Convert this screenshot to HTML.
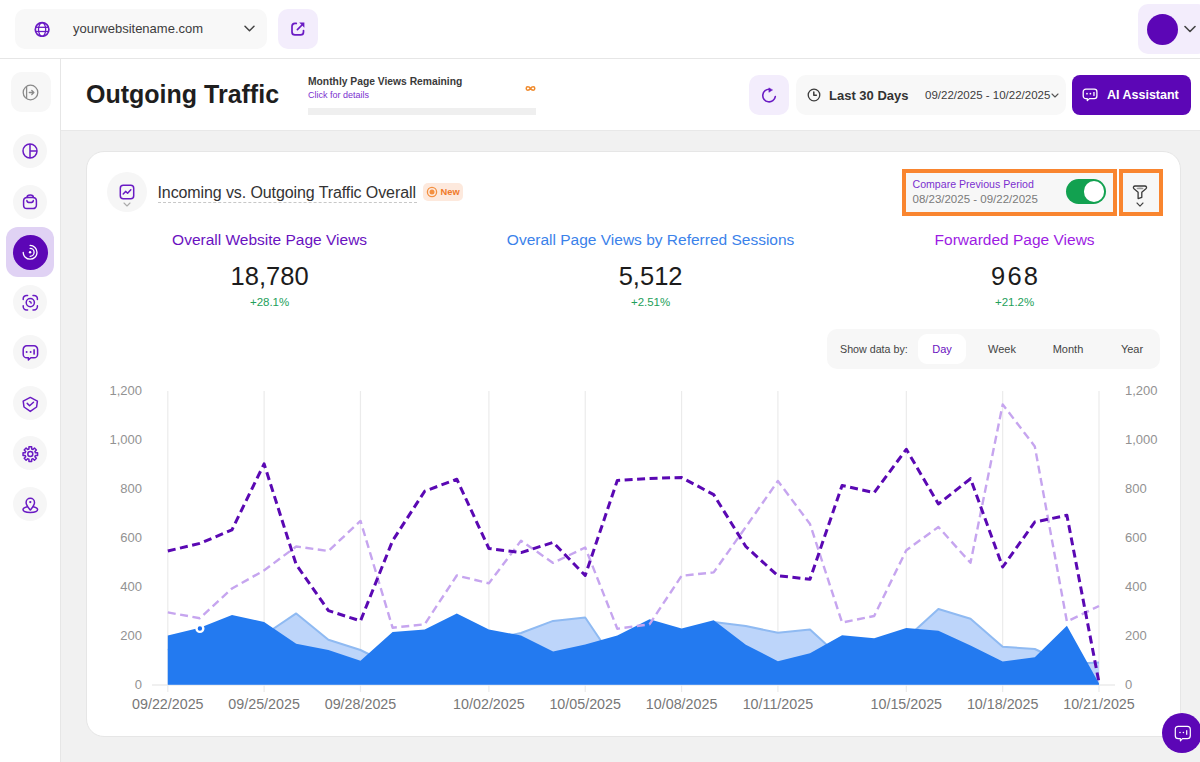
<!DOCTYPE html>
<html><head><meta charset="utf-8">
<style>
*{box-sizing:border-box;margin:0;padding:0}
html,body{width:1200px;height:762px;overflow:hidden;background:#f1f1f1;font-family:"Liberation Sans",sans-serif;color:#333}
.abs{position:absolute}
.t{position:absolute;white-space:nowrap;line-height:1}
#header{left:0;top:0;width:1200px;height:59px;background:#fff;border-bottom:1px solid #e6e6e6}
#sidebar{left:0;top:59px;width:61px;height:703px;background:#fff;border-right:1px solid #e6e6e6}
#titlebar{left:61px;top:59px;width:1139px;height:72px;background:#fff;border-bottom:1px solid #e8e8e8}
.sel{left:15px;top:9px;width:252px;height:40px;background:#f8f8f8;border-radius:10px}
.lbtn{background:#f3edfc;border-radius:10px}
.card{left:86px;top:151px;width:1095px;height:586px;background:#fff;border:1px solid #e6e6e6;border-radius:18px}
.sbi{position:absolute;left:13px;width:34px;height:34px;border-radius:50%;background:#f6f6f6}
.sbi svg{position:absolute;left:9px;top:9px}
.yl{font-size:13px;color:#929292;z-index:3}
.xl{font-size:14.3px;color:#777;width:100px;text-align:center;z-index:3}
</style></head>
<body>
<div id="header" class="abs"></div>
<div class="abs sel"></div>
<div class="abs lbtn" style="left:278px;top:9px;width:40px;height:40px"></div>
<div class="abs lbtn" style="left:1138px;top:4px;width:70px;height:50px"></div>
<div class="abs" style="left:1147px;top:14px;width:31px;height:31px;border-radius:50%;background:#5c06b6"></div>


<!-- header content -->
<svg class="abs" style="left:34px;top:21px" width="16" height="16" viewBox="0 0 16 16"><circle cx="8.1" cy="8.5" r="6.8" fill="#fff" stroke="#6a1bc4" stroke-width="1.7"/><g stroke="#6a1bc4" stroke-width="1.3" fill="none"><line x1="1.5" y1="6.3" x2="14.7" y2="6.3"/><line x1="1.5" y1="10.5" x2="14.7" y2="10.5"/><ellipse cx="8.1" cy="8.5" rx="3.6" ry="6.8"/></g></svg>
<div class="t" style="left:73px;top:22px;font-size:13px;color:#3c3c3c">yourwebsitename.com</div>
<svg class="abs" style="left:243.5px;top:25px" width="12" height="8" viewBox="0 0 12 8"><path d="M1 1.3 L5.5 5.8 L10 1.3" stroke="#444" stroke-width="1.5" fill="none" stroke-linecap="round" stroke-linejoin="round"/></svg>
<svg class="abs" style="left:290px;top:21px" width="16" height="16" viewBox="0 0 16 16"><g stroke="#6a1bc4" stroke-width="1.7" fill="none" stroke-linecap="round" stroke-linejoin="round"><path d="M6.3 2.4 H5 A3 3 0 0 0 2 5.4 V10.9 A3 3 0 0 0 5 13.9 H10.5 A3 3 0 0 0 13.5 10.9 V9.6"/><path d="M7.4 8.6 L12 4"/></g><path d="M9.2 1.6 L14.4 1.6 L14.4 6.8 Z" fill="#6a1bc4"/></svg>
<svg class="abs" style="left:1184px;top:25px" width="12" height="8" viewBox="0 0 12 8"><path d="M1 1.5 L6 6.5 L11 1.5" stroke="#444" stroke-width="1.6" fill="none" stroke-linecap="round" stroke-linejoin="round"/></svg>

<div id="sidebar" class="abs"></div>
<div id="titlebar" class="abs"></div>

<!-- sidebar content -->
<div class="abs" style="left:10.5px;top:72px;width:40px;height:40px;background:#f7f7f7;border-radius:11px"></div>
<svg class="abs" style="left:22px;top:84px" width="17" height="17" viewBox="0 0 17 17"><circle cx="8.5" cy="8.5" r="7.3" stroke="#8a8a8a" stroke-width="1.3" fill="none"/><path d="M4.6 2.6 V14.4" stroke="#8a8a8a" stroke-width="1.3"/><path d="M7.3 8.5 H11.8 M9.8 6.5 L11.9 8.5 L9.8 10.5" stroke="#8a8a8a" stroke-width="1.3" fill="none" stroke-linecap="round" stroke-linejoin="round"/></svg>

<div class="sbi" style="top:134px"><svg width="16" height="16" viewBox="0 0 16 16"><g stroke="#6a1bc4" stroke-width="1.5" fill="none"><circle cx="8" cy="8" r="7"/><path d="M8 1 V15 M8 8 H15"/></g></svg></div>
<div class="sbi" style="top:185px"><svg width="16" height="16" viewBox="0 0 16 16" style="overflow:visible"><g stroke="#6a1bc4" stroke-width="1.5" fill="none" stroke-linecap="round" stroke-linejoin="round"><path d="M4.9 3.4 H11.1 A3.3 3.3 0 0 1 14.4 6.7 V11.3 A3.3 3.3 0 0 1 11.1 14.6 H4.9 A3.3 3.3 0 0 1 1.6 11.3 V6.7 A3.3 3.3 0 0 1 4.9 3.4 Z"/><path d="M5 3.4 C5 1.5 6.3 1 8.2 1 C10.1 1 11.4 1.5 11.4 3.4"/><path d="M4.9 6.4 V6.8 C4.9 8.2 6 8.6 8.1 8.6 C10.2 8.6 11.3 8.2 11.3 6.8 V6.4"/></g></svg></div>

<div class="abs" style="left:6px;top:227px;width:48px;height:50px;background:#e0d2f4;border-radius:12px"></div>
<div class="abs" style="left:12.8px;top:234.8px;width:35px;height:35px;border-radius:50%;background:#5c06b6"></div>
<svg class="abs" style="left:21px;top:243px" width="18" height="18" viewBox="0 0 18 18"><g stroke="#fff" stroke-width="1.3" fill="none" stroke-linecap="round"><path d="M9.1 2.4 A6.9 6.9 0 1 1 2.2 9.3"/><path d="M9.1 5.3 A4 4 0 0 1 9.1 13.3"/></g><circle cx="9.1" cy="9.3" r="1.2" fill="#fff"/></svg>

<div class="sbi" style="top:285px"><svg width="16" height="16" viewBox="0 0 16 16" style="overflow:visible"><g stroke="#6a1bc4" stroke-width="1.5" fill="none" stroke-linecap="round"><path d="M1.2 5.6 V4.8 A3.4 3.4 0 0 1 4.6 1.4 H5.6"/><path d="M11 1.4 H12 A3.4 3.4 0 0 1 15.4 4.8 V5.6"/><path d="M15.4 11.8 V12.6 A3.4 3.4 0 0 1 12 16 H11"/><path d="M5.6 16 H4.6 A3.4 3.4 0 0 1 1.2 12.6 V11.8"/><circle cx="8.3" cy="8.6" r="4.1"/><path d="M7.5 7.4 A1.9 1.9 0 0 1 9.2 9.1"/></g></svg></div>
<div class="sbi" style="top:335px"><svg width="16" height="16" viewBox="0 0 16 16" style="overflow:visible"><path d="M4.8 1.8 H12 A3.6 3.6 0 0 1 15.6 5.4 V10.2 A3.6 3.6 0 0 1 12 13.8 H8.8 L6.4 15.9 V13.8 H4.8 A3.6 3.6 0 0 1 1.2 10.2 V5.4 A3.6 3.6 0 0 1 4.8 1.8 Z" stroke="#6a1bc4" stroke-width="1.5" fill="none" stroke-linejoin="round"/><circle cx="4.6" cy="8.1" r="1" fill="#6a1bc4"/><circle cx="8.6" cy="8.1" r="1" fill="#6a1bc4"/><rect x="11.3" y="5.3" width="1.6" height="5.3" fill="#6a1bc4"/></svg></div>
<div class="sbi" style="top:386px"><svg width="16" height="16" viewBox="0 0 16 16" style="overflow:visible"><g stroke="#6a1bc4" stroke-width="1.5" fill="none" stroke-linecap="round" stroke-linejoin="round"><path d="M8.3 2.4 L15.4 6.1 L14.6 12 L8.3 16.4 L2 12 L1.2 6.1 Z"/><path d="M5.2 8.4 L7.6 10.8 L11.5 7.2"/></g></svg></div>
<div class="sbi" style="top:436px"><svg width="16" height="16" viewBox="0 0 16 16" style="overflow:visible"><g stroke="#6a1bc4" stroke-width="1.5" fill="none" stroke-linejoin="round"><path d="M6.27 4.20 L6.93 3.98 L6.95 1.82 L9.65 1.82 L9.67 3.98 L10.33 4.20 L10.95 4.51 L12.49 3.00 L14.40 4.91 L12.89 6.45 L13.20 7.07 L13.42 7.73 L15.58 7.75 L15.58 10.45 L13.42 10.47 L13.20 11.13 L12.89 11.75 L14.40 13.29 L12.49 15.20 L10.95 13.69 L10.33 14.00 L9.67 14.22 L9.65 16.38 L6.95 16.38 L6.93 14.22 L6.27 14.00 L5.65 13.69 L4.11 15.20 L2.20 13.29 L3.71 11.75 L3.40 11.13 L3.18 10.47 L1.02 10.45 L1.02 7.75 L3.18 7.73 L3.40 7.07 L3.71 6.45 L2.20 4.91 L4.11 3.00 L5.65 4.51 Z"/><circle cx="8.3" cy="9.1" r="2.5"/></g></svg></div>
<div class="sbi" style="top:487px"><svg width="16" height="16" viewBox="0 0 16 16" style="overflow:visible"><g stroke="#6a1bc4" stroke-width="1.5" fill="none" stroke-linecap="round" stroke-linejoin="round"><path d="M8.3 14 C6.5 11.7 4.1 9.3 4.1 6.4 A4.2 4.2 0 0 1 12.5 6.4 C12.5 9.3 10.1 11.7 8.3 14 Z"/><path d="M5.2 10.7 C2.7 11.3 1 12.3 1 13.5 C1 15.2 4.3 16.4 8.3 16.4 C12.3 16.4 15.6 15.2 15.6 13.5 C15.6 12.3 13.9 11.3 11.4 10.7"/></g><circle cx="8.3" cy="6.1" r="1.15" fill="#6a1bc4"/></svg></div>



<!-- title bar content -->
<div class="t" style="left:86px;top:82px;font-size:25px;font-weight:700;color:#1e1e1e">Outgoing Traffic</div>
<div class="t" style="left:308px;top:77px;font-size:10.3px;font-weight:700;color:#3a3a3a">Monthly Page Views Remaining</div>
<div class="t" style="left:308px;top:91px;font-size:9px;color:#7b2fcf">Click for details</div>
<div class="abs" style="left:308px;top:108px;width:228px;height:7px;background:#efefef"></div>
<svg class="abs" style="left:525px;top:85px" width="11" height="7" viewBox="0 0 11 7"><path d="M5.5 3.5 C4 1.3 1.2 1.3 1.2 3.5 C1.2 5.7 4 5.7 5.5 3.5 C7 1.3 9.8 1.3 9.8 3.5 C9.8 5.7 7 5.7 5.5 3.5Z" stroke="#f08a2c" stroke-width="1.5" fill="none"/></svg>

<div class="abs lbtn" style="left:749px;top:75px;width:40px;height:40px"></div>
<svg class="abs" style="left:761px;top:87px" width="16" height="17" viewBox="0 0 16 17"><path d="M8.6 2.3 A6.3 6.3 0 1 0 14.3 9.6" stroke="#6a1bc4" stroke-width="1.6" fill="none" stroke-linecap="round"/><path d="M7.9 0.9 L7.9 5.3 L11.6 2.9 Z" fill="#6a1bc4" stroke="#6a1bc4" stroke-width="0.5" stroke-linejoin="round"/></svg>

<div class="abs" style="left:796px;top:75px;width:270px;height:40px;background:#f8f8f8;border-radius:10px"></div>
<svg class="abs" style="left:806px;top:88px" width="15" height="15" viewBox="0 0 15 15"><circle cx="8" cy="7" r="5.8" stroke="#3c3c3c" stroke-width="1.3" fill="none"/><path d="M7.8 3.9 V7.3 H10.4" stroke="#3c3c3c" stroke-width="1.5" fill="none" stroke-linecap="round" stroke-linejoin="round"/></svg>
<div class="t" style="left:829px;top:89px;font-size:13px;font-weight:700;color:#333">Last 30 Days</div>
<div class="t" style="left:925px;top:90px;font-size:11.5px;color:#3c3c3c">09/22/2025 - 10/22/2025</div>
<svg class="abs" style="left:1051px;top:93px" width="8" height="5" viewBox="0 0 8 5"><path d="M1 1 L4 4 L7 1" stroke="#555" stroke-width="1.1" fill="none" stroke-linecap="round" stroke-linejoin="round"/></svg>

<div class="abs" style="left:1072px;top:75px;width:119px;height:40px;background:#5c06b6;border-radius:8px"></div>
<svg class="abs" style="left:1082px;top:87px" width="16" height="16" viewBox="0 0 16 16"><path d="M3.8 2.1 H12.3 A2.6 2.6 0 0 1 14.9 4.7 V9 A2.6 2.6 0 0 1 12.3 11.6 H7.4 L5.3 13.6 V11.6 H3.8 A2.6 2.6 0 0 1 1.2 9 V4.7 A2.6 2.6 0 0 1 3.8 2.1 Z" stroke="#fff" stroke-width="1.3" fill="none" stroke-linejoin="round"/><circle cx="5" cy="6.7" r="0.85" fill="#fff"/><circle cx="8.4" cy="6.7" r="0.85" fill="#fff"/><rect x="11.3" y="5" width="1.3" height="3.9" fill="#fff"/></svg>
<div class="t" style="left:1107px;top:89px;font-size:12.5px;font-weight:700;color:#fff">AI Assistant</div>

<div class="abs card"></div>

<!-- card header -->
<div class="abs" style="left:107px;top:172px;width:40px;height:40px;border-radius:50%;background:#f6f6f6"></div>
<svg class="abs" style="left:119px;top:183.5px" width="16" height="16" viewBox="0 0 16 16"><rect x="1.3" y="1.3" width="13.4" height="13.4" rx="3" stroke="#6a1bc4" stroke-width="1.5" fill="none"/><path d="M4.2 10 L6.6 7.4 L8.6 9.2 L11.8 5.8" stroke="#6a1bc4" stroke-width="1.5" fill="none" stroke-linecap="round" stroke-linejoin="round"/></svg>
<svg class="abs" style="left:123px;top:202px" width="8" height="5" viewBox="0 0 8 5"><path d="M1 1 L4 4 L7 1" stroke="#aaa" stroke-width="1.1" fill="none" stroke-linecap="round" stroke-linejoin="round"/></svg>
<div class="t" style="left:157.5px;top:185px;font-size:16px;color:#333;letter-spacing:-0.1px">Incoming vs. Outgoing Traffic Overall</div>
<div class="abs" style="left:157.5px;top:202px;width:259px;height:0;border-top:1px dashed #c8c8c8"></div>
<div class="abs" style="left:423px;top:182.5px;width:40px;height:18px;background:#fde9dd;border-radius:5px"></div>
<svg class="abs" style="left:425.5px;top:185.5px" width="12" height="12" viewBox="0 0 12 12"><circle cx="6" cy="6" r="4.6" stroke="#f39040" stroke-width="1.3" fill="none"/><circle cx="6" cy="6" r="2.5" fill="#f39040"/></svg>
<div class="t" style="left:440.5px;top:187.5px;font-size:9.3px;font-weight:700;color:#f07a2a">New</div>

<div class="abs" style="left:902px;top:168.5px;width:215px;height:47px;border:4px solid #f9852f;background:#f7f7f7"></div>
<div class="t" style="left:912.5px;top:179px;font-size:10.6px;color:#7b2fcf">Compare Previous Period</div>
<div class="t" style="left:912.5px;top:194px;font-size:11.5px;color:#7a7a7a">08/23/2025 - 09/22/2025</div>
<div class="abs" style="left:1065.5px;top:179px;width:40px;height:25px;border-radius:13px;background:#12a150"></div>
<div class="abs" style="left:1083.5px;top:181.3px;width:20.5px;height:20.5px;border-radius:50%;background:#fff"></div>

<div class="abs" style="left:1119px;top:168.5px;width:44px;height:47.5px;border:4px solid #f9852f;background:#f7f7f7"></div>
<svg class="abs" style="left:1133px;top:184.6px;overflow:visible" width="14" height="14" viewBox="0 0 14 14"><path d="M2.2 1 H11.8 C13.5 1 14.2 2.6 12.9 3.8 L8.8 7.2 V12.3 L5.1 13.6 V7.2 L1 3.8 C-0.3 2.6 0.5 1 2.2 1 Z" stroke="#3a3a3a" stroke-width="1.3" fill="none" stroke-linejoin="round"/><ellipse cx="7" cy="3.4" rx="3.4" ry="0.9" fill="#999"/></svg>
<svg class="abs" style="left:1135.8px;top:201.8px" width="8" height="6" viewBox="0 0 8 6"><path d="M1 1 L4 4.2 L7 1" stroke="#444" stroke-width="1.1" fill="none" stroke-linecap="round" stroke-linejoin="round"/></svg>

<!-- metrics -->
<div class="t" style="left:169.6px;width:200px;text-align:center;top:232px;font-size:15.5px;color:#6a12c0">Overall Website Page Views</div>
<div class="t" style="left:169.6px;width:200px;text-align:center;top:264px;font-size:25.5px;color:#1c1c1c">18,780</div>
<div class="t" style="left:169.6px;width:200px;text-align:center;top:296.5px;font-size:11.5px;color:#23a05a">+28.1%</div>

<div class="t" style="left:500.6px;width:300px;text-align:center;top:232px;font-size:15.5px;color:#3b82ea">Overall Page Views by Referred Sessions</div>
<div class="t" style="left:500.6px;width:300px;text-align:center;top:264px;font-size:25.5px;color:#1c1c1c">5,512</div>
<div class="t" style="left:500.6px;width:300px;text-align:center;top:296.5px;font-size:11.5px;color:#23a05a">+2.51%</div>

<div class="t" style="left:914.6px;width:200px;text-align:center;top:232px;font-size:15.5px;color:#9d1be3">Forwarded Page Views</div>
<div class="t" style="left:914.6px;width:200px;text-align:center;top:264px;font-size:25.5px;color:#1c1c1c;letter-spacing:2.2px;padding-left:2px">968</div>
<div class="t" style="left:914.6px;width:200px;text-align:center;top:296.5px;font-size:11.5px;color:#23a05a">+21.2%</div>

<!-- pills -->
<div class="abs" style="left:827px;top:329px;width:333px;height:40px;background:#f7f7f7;border-radius:10px"></div>
<div class="t" style="left:840px;top:344px;font-size:10.7px;color:#444">Show data by:</div>
<div class="abs" style="left:918px;top:334px;width:48px;height:30px;background:#fff;border-radius:9px"></div>
<div class="t" style="left:918px;width:48px;text-align:center;top:344px;font-size:11px;color:#6a12c0">Day</div>
<div class="t" style="left:982px;width:40px;text-align:center;top:344px;font-size:11px;color:#444">Week</div>
<div class="t" style="left:1048px;width:40px;text-align:center;top:344px;font-size:11px;color:#444">Month</div>
<div class="t" style="left:1112px;width:40px;text-align:center;top:344px;font-size:11px;color:#444">Year</div>

<!-- FAB -->
<div class="abs" style="left:1162px;top:713px;width:40px;height:40px;border-radius:50%;background:#5c06b6;z-index:5"></div>
<svg class="abs" style="left:1174px;top:725px;z-index:6" width="18" height="18" viewBox="0 0 18 18"><path d="M4.3 1.3 H13.3 A3 3 0 0 1 16.3 4.3 V10.7 A3 3 0 0 1 13.3 13.7 H8.4 L6.4 15.8 V13.7 H4.3 A3 3 0 0 1 1.3 10.7 V4.3 A3 3 0 0 1 4.3 1.3 Z" stroke="#fff" stroke-width="1.2" fill="none" stroke-linejoin="round"/><circle cx="6" cy="7.5" r="0.8" fill="#fff"/><circle cx="9.4" cy="7.5" r="0.8" fill="#fff"/><rect x="12.1" y="5.2" width="1.2" height="4.6" fill="#fff"/></svg>








<!--CHART-->
<svg class="abs" style="left:0;top:0;z-index:2" width="1200" height="762" viewBox="0 0 1200 762">
<line x1="167.80" y1="391" x2="167.80" y2="692" stroke="#ebebeb" stroke-width="1.2"/>
<line x1="264.13" y1="391" x2="264.13" y2="692" stroke="#ebebeb" stroke-width="1.2"/>
<line x1="360.46" y1="391" x2="360.46" y2="692" stroke="#ebebeb" stroke-width="1.2"/>
<line x1="488.90" y1="391" x2="488.90" y2="692" stroke="#ebebeb" stroke-width="1.2"/>
<line x1="585.23" y1="391" x2="585.23" y2="692" stroke="#ebebeb" stroke-width="1.2"/>
<line x1="681.56" y1="391" x2="681.56" y2="692" stroke="#ebebeb" stroke-width="1.2"/>
<line x1="777.89" y1="391" x2="777.89" y2="692" stroke="#ebebeb" stroke-width="1.2"/>
<line x1="906.33" y1="391" x2="906.33" y2="692" stroke="#ebebeb" stroke-width="1.2"/>
<line x1="1002.66" y1="391" x2="1002.66" y2="692" stroke="#ebebeb" stroke-width="1.2"/>
<line x1="1098.99" y1="391" x2="1098.99" y2="692" stroke="#ebebeb" stroke-width="1.2"/>
<line x1="152" y1="685" x2="1115" y2="685" stroke="#ebebeb" stroke-width="1.3"/>
<path d="M167.8,684.8 L167.8,650.0 199.9,640.0 232.0,628.0 264.1,635.0 296.2,613.4 328.4,639.7 360.5,650.0 392.6,666.0 424.7,660.0 456.8,650.0 488.9,640.0 521.0,633.0 553.1,620.9 585.2,617.5 617.3,665.0 649.5,660.0 681.6,645.0 713.7,622.0 745.8,626.0 777.9,632.8 810.0,629.4 842.1,659.0 874.2,650.0 906.3,638.3 938.4,609.0 970.5,618.7 1002.7,646.8 1034.8,649.0 1066.9,664.0 1099.0,662.4 L1099.0,684.8 Z" fill="#bdd5fa"/>
<polyline points="167.8,650.0 199.9,640.0 232.0,628.0 264.1,635.0 296.2,613.4 328.4,639.7 360.5,650.0 392.6,666.0 424.7,660.0 456.8,650.0 488.9,640.0 521.0,633.0 553.1,620.9 585.2,617.5 617.3,665.0 649.5,660.0 681.6,645.0 713.7,622.0 745.8,626.0 777.9,632.8 810.0,629.4 842.1,659.0 874.2,650.0 906.3,638.3 938.4,609.0 970.5,618.7 1002.7,646.8 1034.8,649.0 1066.9,664.0 1099.0,662.4" fill="none" stroke="#8fbaf2" stroke-width="2" stroke-linejoin="round"/>
<path d="M167.8,684.8 L167.8,635.6 199.9,627.7 232.0,615.0 264.1,622.0 296.2,643.8 328.4,650.0 360.5,660.8 392.6,632.0 424.7,629.4 456.8,613.4 488.9,629.4 521.0,635.6 553.1,651.6 585.2,644.5 617.3,635.6 649.5,619.2 681.6,628.4 713.7,620.2 745.8,644.8 777.9,661.2 810.0,653.3 842.1,635.2 874.2,638.2 906.3,627.9 938.4,630.8 970.5,645.5 1002.7,661.5 1034.8,657.3 1066.9,625.8 1099.0,683.4 L1099.0,684.8 Z" fill="#237af0"/>
<polyline points="167.8,612.4 199.9,618.2 232.0,588.5 264.1,570.4 296.2,546.5 328.4,551.0 360.5,520.9 392.6,627.7 424.7,624.3 456.8,575.5 488.9,583.3 521.0,540.7 553.1,562.9 585.2,547.5 617.3,628.7 649.5,624.3 681.6,575.8 713.7,572.4 745.8,527.0 777.9,481.0 810.0,524.0 842.1,622.6 874.2,616.0 906.3,550.2 938.4,527.0 970.5,562.8 1002.7,404.4 1034.8,446.4 1066.9,621.6 1099.0,606.0" fill="none" stroke="#c6a5ef" stroke-width="2.4" stroke-dasharray="8 4.5" stroke-linejoin="round"/>
<polyline points="167.8,551.0 199.9,543.4 232.0,529.8 264.1,463.9 296.2,564.6 328.4,610.6 360.5,620.9 392.6,540.7 424.7,491.2 456.8,479.2 488.9,548.5 521.0,552.6 553.1,542.4 585.2,575.5 617.3,480.5 649.5,478.5 681.6,477.5 713.7,494.6 745.8,546.5 777.9,575.8 810.0,579.2 842.1,485.4 874.2,492.6 906.3,449.3 938.4,504.0 970.5,478.7 1002.7,567.0 1034.8,522.0 1066.9,515.3 1099.0,682.5" fill="none" stroke="#5a08b3" stroke-width="3" stroke-dasharray="8 4.5" stroke-linejoin="round"/>
<circle cx="199.9" cy="628.5" r="3.4" fill="#1a6ef0" stroke="#fff" stroke-width="2.4"/>
</svg>
<div class="t yl" style="right:1058px;top:678px">0</div>
<div class="t yl" style="left:1125px;top:678px">0</div>
<div class="t yl" style="right:1058px;top:629px">200</div>
<div class="t yl" style="left:1125px;top:629px">200</div>
<div class="t yl" style="right:1058px;top:580px">400</div>
<div class="t yl" style="left:1125px;top:580px">400</div>
<div class="t yl" style="right:1058px;top:531px">600</div>
<div class="t yl" style="left:1125px;top:531px">600</div>
<div class="t yl" style="right:1058px;top:482px">800</div>
<div class="t yl" style="left:1125px;top:482px">800</div>
<div class="t yl" style="right:1058px;top:433px">1,000</div>
<div class="t yl" style="left:1125px;top:433px">1,000</div>
<div class="t yl" style="right:1058px;top:384px">1,200</div>
<div class="t yl" style="left:1125px;top:384px">1,200</div>
<div class="t xl" style="left:117.8px;top:697px">09/22/2025</div>
<div class="t xl" style="left:214.1px;top:697px">09/25/2025</div>
<div class="t xl" style="left:310.5px;top:697px">09/28/2025</div>
<div class="t xl" style="left:438.9px;top:697px">10/02/2025</div>
<div class="t xl" style="left:535.2px;top:697px">10/05/2025</div>
<div class="t xl" style="left:631.6px;top:697px">10/08/2025</div>
<div class="t xl" style="left:727.9px;top:697px">10/11/2025</div>
<div class="t xl" style="left:856.3px;top:697px">10/15/2025</div>
<div class="t xl" style="left:952.7px;top:697px">10/18/2025</div>
<div class="t xl" style="left:1049.0px;top:697px">10/21/2025</div>
<!--/CHART-->
</body></html>
